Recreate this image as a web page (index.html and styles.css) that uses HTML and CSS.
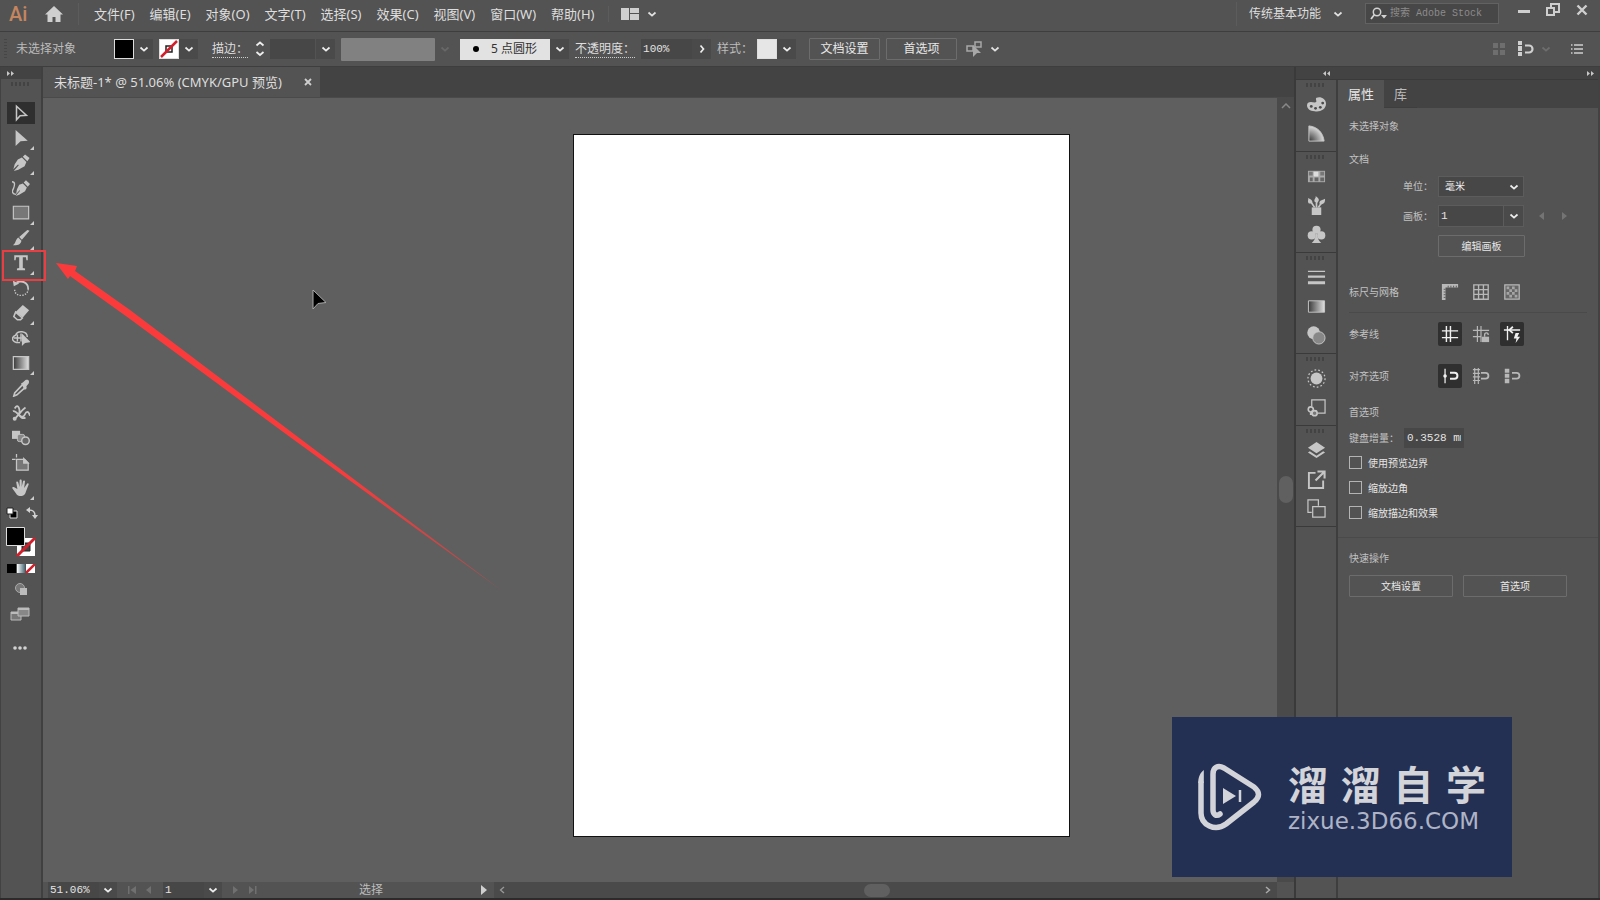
FILE: index.html
```html
<!DOCTYPE html>
<html lang="zh-CN">
<head>
<meta charset="utf-8">
<title>未标题-1</title>
<link rel="stylesheet" href="styles.css">
</head>
<body>
<svg class="defs" width="0" height="0" aria-hidden="true">
  <defs>
    <linearGradient id="fade"><stop offset="0" stop-color="#3a3a3a"/><stop offset="1" stop-color="#e0e0e0"/></linearGradient>
    <linearGradient id="fade2"><stop offset="0" stop-color="#fff"/><stop offset="1" stop-color="#4a6a78"/></linearGradient>
    <radialGradient id="quarter" cx="0" cy="1" r="1"><stop offset="0" stop-color="#333"/><stop offset="1" stop-color="#ddd"/></radialGradient>
    <linearGradient id="tail" gradientUnits="userSpaceOnUse" x1="340" y1="470" x2="500" y2="590"><stop offset="0" stop-color="#fb3b3b"/><stop offset="1" stop-color="#fb3b3b" stop-opacity=".5"/></linearGradient>
    <symbol id="down" viewBox="0 0 10 10"><path d="M1.500 3.500 5 6.700 8.500 3.500" fill="none" stroke="currentColor" stroke-width="1.700"/></symbol>
    <symbol id="magnet" viewBox="0 0 18 18"><path d="M8 5.500h4a3.500 3.500 0 0 1 0 7H8" fill="none" stroke="currentColor" stroke-width="2.200"/></symbol>
  </defs>
</svg>

<header class="menubar">
  <span class="brand">Ai</span>
  <button class="icon-btn home" aria-label="主页"><svg width="18" height="16" viewBox="0 0 18 16"><path d="M9 0 0 8.500h2.500V16h5v-5h3v5h5V8.500H18Z"/></svg></button>
  <nav class="menus">
    <button>文件(F)</button><button>编辑(E)</button><button>对象(O)</button><button>文字(T)</button><button>选择(S)</button><button>效果(C)</button><button>视图(V)</button><button>窗口(W)</button><button>帮助(H)</button>
  </nav>
  <button class="icon-btn arrange" aria-label="排列文档"><svg width="18" height="12" viewBox="0 0 18 12"><path d="M0 0h8v12H0zM9 0h9v5H9zM9 6h9v6H9z"/></svg><svg class="chev" width="10" height="10"><use href="#down"/></svg></button>
  <button class="icon-btn workspace-switch">传统基本功能<svg class="chev" width="10" height="10"><use href="#down"/></svg></button>
  <label class="search"><svg width="18" height="14" viewBox="0 0 18 14"><circle cx="7" cy="5" r="3.700" fill="none" stroke="currentColor" stroke-width="1.500"/><path d="M4.500 7.500 1 12" stroke="currentColor" stroke-width="1.800"/><path d="M11 8h6l-3 3.500z"/></svg><input type="text" placeholder="搜索 Adobe Stock" aria-label="搜索 Adobe Stock"></label>
  <div class="window-buttons">
    <button class="icon-btn" aria-label="最小化"><svg width="16" height="16" viewBox="0 0 16 16"><path d="M2 8h12v3H2z"/></svg></button>
    <button class="icon-btn" aria-label="还原"><svg width="16" height="16" viewBox="0 0 16 16"><path d="M6 7V2h8v8H9M2 6h7v7H2z" fill="none" stroke="currentColor" stroke-width="2"/></svg></button>
    <button class="icon-btn" aria-label="关闭"><svg width="16" height="16" viewBox="0 0 16 16"><path d="m3.500 3.500 9 9m0-9-9 9" stroke="currentColor" stroke-width="2.400"/></svg></button>
  </div>
</header>

<section class="controlbar">
  <span class="side-grip"></span>
  <span class="status-label">未选择对象</span>
  <div class="combo"><button class="swatch swatch-black" aria-label="填色"></button><button class="drop" aria-label="填色选项"><svg width="10" height="10"><use href="#down"/></svg></button></div>
  <div class="combo"><button class="swatch" aria-label="描边颜色"><svg width="20" height="20" viewBox="0 0 20 20"><path d="M0 0h20v20H0z" fill="#fff"/><path d="M6 6h6v6H6z" fill="none" stroke="#222" stroke-width="1.500"/><path d="M1 17 17 1" stroke="#d0202c" stroke-width="2.500"/></svg></button><button class="drop" aria-label="描边选项"><svg width="10" height="10"><use href="#down"/></svg></button></div>
  <label class="dotted stroke-label" for="stroke-w">描边：</label>
  <button class="icon-btn spin" aria-label="调整描边"><svg width="10" height="18" viewBox="0 0 10 18"><path d="M1.500 5.500 5 2.500l3.500 3M1.500 12 5 15l3.500-3" fill="none" stroke="currentColor" stroke-width="1.800"/></svg></button>
  <div class="combo"><input id="stroke-w" class="field stroke-field" type="text"><button class="drop" aria-label="描边粗细"><svg width="10" height="10"><use href="#down"/></svg></button></div>
  <div class="combo"><span class="profile"></span><button class="drop drop-off" aria-label="宽度配置" disabled><svg width="10" height="10"><use href="#down"/></svg></button></div>
  <div class="combo"><button class="brush"><i class="dot"></i>5 点圆形</button><button class="drop" aria-label="画笔"><svg width="10" height="10"><use href="#down"/></svg></button></div>
  <label class="dotted opacity-label" for="opacity">不透明度：</label>
  <div class="combo"><input id="opacity" class="field opacity-field" type="text" value="100%"><button class="drop" aria-label="不透明度"><svg width="8" height="12" viewBox="0 0 8 12"><path d="m2.500 2.500 3 3.500-3 3.500" fill="none" stroke="currentColor" stroke-width="1.700"/></svg></button></div>
  <span class="style-label">样式：</span>
  <div class="combo"><button class="swatch swatch-light" aria-label="图形样式"></button><button class="drop" aria-label="样式选项"><svg width="10" height="10"><use href="#down"/></svg></button></div>
  <div class="bar-buttons"><button class="outline-btn">文档设置</button><button class="outline-btn">首选项</button></div>
  <button class="icon-btn select-like" aria-label="选择类似对象"><svg width="18" height="18" viewBox="0 0 18 18"><path d="M1 6h6v5H1zM9 2h6v5H9z" fill="none" stroke="currentColor" stroke-width="1.500"/><path d="m7 5 8 8h-4l-4 4z"/></svg><svg class="chev" width="10" height="10"><use href="#down"/></svg></button>
  <div class="bar-right">
    <svg class="faint" width="12" height="12" viewBox="0 0 12 12"><path d="M0 0h5v5H0zM7 0h5v5H7zM0 7h5v5H0zM7 7h5v5H7z"/></svg>
    <button class="icon-btn" aria-label="对齐像素"><svg width="18" height="18" viewBox="0 0 18 18"><path d="M1 1h4v4H1zM1 6h4v5H1zM1 12h4v4H1z"/><use href="#magnet" width="18" height="18"/></svg></button>
    <svg class="faint" width="10" height="10"><use href="#down"/></svg>
    <button class="icon-btn list-btn" aria-label="菜单"><svg width="12" height="10" viewBox="0 0 12 10"><path d="M0 1h1.500M3 1h9M0 5h1.500M3 5h9M0 9h1.500M3 9h9" stroke="currentColor" stroke-width="1.500"/></svg></button>
  </div>
</section>

<main class="app">
  <aside class="toolbar">
    <div class="strip"><svg width="7" height="5" viewBox="0 0 7 5"><path d="M0 0l3 2.500L0 5zM4 0l3 2.500L4 5z"/></svg></div>
    <span class="grip"></span>
    <div class="tools">
      <button class="tool active" aria-label="选择"><svg viewBox="0 0 20 20"><path d="M5 2.500v15l4-4.500 7-.5z" fill="none" stroke="currentColor" stroke-width="1.700"/></svg></button>
      <button class="tool more" aria-label="直接选择"><svg viewBox="0 0 20 20"><path d="M4 1v18l5.500-5.500 8-.5z"/></svg></button>
      <button class="tool more" aria-label="钢笔"><svg viewBox="0 0 20 20"><path fill-rule="evenodd" d="m11 4 5 5-2 4.500-7 4-5 1.500 5.500-6.500-.8-.8L1.500 17 3 11.500 6.500 6zM12 3l2.500-2.500 5 4L17 8z"/></svg></button>
      <button class="tool" aria-label="曲率"><svg viewBox="0 0 20 20"><path d="m12 5 4.500 4.500-2 4-6.500 4-4 1.500 5-6-.6-.6L4.500 17l1-5.500L8 6.500zM13 4l2.500-2.500L20 5.500l-2.500 3z"/><path d="M0 3c4 0 3 4 1.500 8-2 3-1 6 3 6" fill="none" stroke="currentColor" stroke-width="1.500"/></svg></button>
      <button class="tool more" aria-label="矩形"><svg viewBox="0 0 20 20"><path d="M1.500 2.500h17v14h-17z" fill="#777" stroke="currentColor" stroke-width="1.300"/></svg></button>
      <button class="tool more" aria-label="画笔"><svg viewBox="0 0 20 20"><path d="M19.500 2 17 1 8 9l3 3zM7 9.500l3.500 3.500c-1 5-5 5-9.500 5 3-1 3-7 6-8.500z"/></svg></button>
      <button class="tool more" aria-label="文字"><svg viewBox="0 0 20 20"><path d="M2.500 1.500h15V7H16l-.5-3.500H12V15.500l2.500.5V18h-9v-2l2.500-.5V3.500H4.500L4 7H2.500z"/></svg></button>
      <button class="tool more" aria-label="旋转"><svg viewBox="0 0 20 20"><path d="M5 4c6-3 13 0 13 7" fill="none" stroke="currentColor" stroke-width="2"/><path d="m1 2 1 6 6-3z"/><path d="M18 11c0 9-15 10-15 1" fill="none" stroke="currentColor" stroke-width="1.500" stroke-dasharray="1.500 1.500"/></svg></button>
      <button class="tool more" aria-label="橡皮擦"><svg viewBox="0 0 20 20"><path d="m12 1 7 6-7 8-8-6z"/><path d="m4 9 7.500 6.500-2 2H6l-4-3.500z" fill="none" stroke="currentColor" stroke-width="1.700"/></svg></button>
      <button class="tool" aria-label="形状生成器"><svg viewBox="0 0 20 20"><path d="M9 15c-9 1-11-6-5-8 2-6 13-5 13 2M2 10h9M6 6v8M10 5v9" fill="none" stroke="currentColor" stroke-width="1.600"/><path d="M11 5v14l3.500-3.500 6-1z"/></svg></button>
      <button class="tool more" aria-label="渐变"><svg viewBox="0 0 20 20"><path d="M1.500 3h17v14h-17z" fill="url(#fade)" stroke="currentColor" stroke-width="1.400"/></svg></button>
      <button class="tool" aria-label="吸管"><svg viewBox="0 0 20 20"><path d="m12 6-9 9.500L2 19l3.500-1.500L15 9z" fill="none" stroke="currentColor" stroke-width="1.800"/><path d="m10 5 2-1 3-3c4-1 4.500 2 3.500 4l-2.500 3v3l-2 1z"/></svg></button>
      <button class="tool" aria-label="宽度"><svg viewBox="0 0 20 20"><path d="M2 17C7 14 9 8 15 4M3 5c4-7 6 2 5 5s4 6 6 2 4-5 6 1M1 8c5-2 8 11 14 7" fill="none" stroke="currentColor" stroke-width="2"/><circle cx="3" cy="16.500" r="2.200"/></svg></button>
      <button class="tool" aria-label="混合"><svg viewBox="0 0 20 20"><path d="M0 2h9v9H0z"/><rect x="6" y="6" width="8" height="8" rx="2" fill="#888" stroke="currentColor"/><circle cx="15" cy="13" r="4.200" fill="#666" stroke="currentColor" stroke-width="1.600"/></svg></button>
      <button class="tool" aria-label="画板"><svg viewBox="0 0 20 20"><path d="M5 6h9l4 4v8H5z" fill="#777" stroke="currentColor" stroke-width="1.400"/><path d="M13 5v5h5zM5 0v4M0 6h4" stroke="currentColor" stroke-width="1.400"/></svg></button>
      <button class="tool more" aria-label="抓手"><svg viewBox="0 0 20 20"><path d="m6 11-1.300-7c0-1.700 1.900-1.700 2.300 0L8.400 9V2c0-2 2.400-2 2.400 0v7l1.400-6.500c.4-1.500 2.600-1 2.200.5L13.500 10l3-4.500c.8-1.300 2.500-.5 1.900 1L15.500 14c-1 4-3 5-5.500 5s-4.500-1-5.500-3L.5 10.500c-.8-1.300 1-2.300 2-1.200z"/></svg></button>
    </div>
    <div class="swap"><svg width="12" height="12" viewBox="0 0 12 12"><path d="M4 4h7v7H4z" fill="#000" stroke="#ddd"/><path d="M1 1h6v6H1z" fill="#fff" stroke="#222"/></svg><svg width="12" height="12" viewBox="0 0 12 12"><path d="M3 3c4 0 6 1 6 6" fill="none" stroke="currentColor" stroke-width="1.600"/><path d="M0 3 4 0v6zM6 8h6l-3 4z"/></svg></div>
    <svg class="fillstroke" width="30" height="30" viewBox="0 0 30 30"><path d="M11 11h18v18H11z" fill="#fff"/><path d="M16 16h8v8h-8z" fill="#444" stroke="#222"/><path d="M11 29 29 11" stroke="#d0202c" stroke-width="3"/><path d="M.5.500h18v18H.5z" fill="#000" stroke="#ddd"/></svg>
    <svg class="modes" width="28" height="9" viewBox="0 0 28 9"><path d="M0 0h9v9H0z" fill="#000"/><path d="M10 0h8v9h-8z" fill="url(#fade2)"/><path d="M19 0h9v9h-9z" fill="#fff"/><path d="m19 9 9-9" stroke="#d0202c" stroke-width="2.500"/></svg>
    <svg class="drawmode" width="14" height="14" viewBox="0 0 14 14"><circle cx="6" cy="6" r="4.500" fill="#777" stroke="#aaa"/><path d="M6 6h7v7H6z" fill="#bbb"/></svg>
    <svg class="screenmode" width="20" height="14" viewBox="0 0 20 14"><path d="M1 5h10v8H1z" fill="#777" stroke="#bbb"/><path d="M8 1h11v8H8z" fill="#888" stroke="#bbb"/><path d="M8 1h11v2H8zM1 5h7v2H1z" fill="#bbb"/></svg>
    <svg class="dots" width="14" height="4" viewBox="0 0 14 4"><circle cx="2" cy="2" r="1.800"/><circle cx="7" cy="2" r="1.800"/><circle cx="12" cy="2" r="1.800"/></svg>
    <span class="type-highlight"></span>
  </aside>

  <section class="document">
    <div class="doc-tabs"><div class="doc-tab"><span>未标题-1* @ 51.06% (CMYK/GPU 预览)</span><button class="icon-btn" aria-label="关闭文档"><svg width="8" height="8" viewBox="0 0 8 8"><path d="m1 1 6 6m0-6L1 7" stroke="currentColor" stroke-width="1.800"/></svg></button></div></div>
    <div class="canvas-row">
      <div class="canvas"><div class="artboard"></div></div>
      <div class="vscroll"><svg class="up" width="10" height="6" viewBox="0 0 10 6"><path d="m1 5 4-4 4 4" fill="none" stroke="#888" stroke-width="1.500"/></svg><i class="vthumb"></i></div>
    </div>
    <footer class="statusbar">
      <input class="field zoom" type="text" value="51.06%" aria-label="缩放"><button class="icon-btn sdrop" aria-label="缩放选项"><svg width="10" height="10"><use href="#down"/></svg></button>
      <svg class="nav" width="26" height="10" viewBox="0 0 26 10"><path d="M1 1h1.500v8H1zM9 1v8L3.500 5zM24 1v8l-5-4z"/></svg>
      <input class="field page" type="text" value="1" aria-label="画板导航"><button class="icon-btn sdrop" aria-label="画板选项"><svg width="10" height="10"><use href="#down"/></svg></button>
      <svg class="nav" width="26" height="10" viewBox="0 0 26 10"><path d="m1 1 5 4-5 4zM17 1l5 4-5 4zM23 1h1.500v8H23z"/></svg>
      <span class="mode">选择</span>
      <button class="icon-btn play" aria-label="状态选项"><svg width="6" height="10" viewBox="0 0 6 10"><path d="m0 0 6 5-6 5z"/></svg></button>
      <div class="hscroll"><svg width="6" height="8" viewBox="0 0 6 8"><path d="M5 1 1.500 4 5 7" fill="none" stroke="#999" stroke-width="1.300"/></svg><i class="hthumb"></i><svg width="6" height="8" viewBox="0 0 6 8"><path d="m1 1 3.500 3L1 7" fill="none" stroke="#aaa" stroke-width="1.500"/></svg></div>
    </footer>
  </section>

  <section class="side">
    <div class="strip side-strip"><svg width="7" height="5" viewBox="0 0 7 5"><path d="M3 0v5L0 2.500zM7 0v5L4 2.500z"/></svg><svg width="7" height="5" viewBox="0 0 7 5"><path d="M0 0l3 2.500L0 5zM4 0l3 2.500L4 5z"/></svg></div>
    <div class="side-body">
      <div class="dock">
        <div class="group"><span class="grip"></span>
          <button aria-label="颜色"><svg viewBox="0 0 20 20"><path d="M10 3c4-2 10 1 10 6 0 7-7 9-12 8-5 0-8-3-8-6 0-4 4-4 8-3 4 0 0-4 2-5z"/><g fill="#4a4a4a"><circle cx="4.500" cy="12" r="1.500"/><circle cx="9" cy="14" r="1.500"/><circle cx="14" cy="13" r="1.500"/><circle cx="16.500" cy="8.500" r="1.500"/></g></svg></button>
          <button aria-label="颜色参考"><svg viewBox="0 0 20 20"><path d="M2 2c10 1 15 8 16 16H2z" fill="url(#quarter)" stroke="currentColor"/></svg></button></div>
        <div class="group"><span class="grip"></span>
          <button aria-label="色板"><svg viewBox="0 0 20 20"><path d="M1 4h18v12H1z" fill="#aaa"/><path d="M2 5h4v4H2zM14 5h4v4h-4z" fill="#777"/><path d="M7 5h5v5H7z" fill="#ddd"/><path d="M3 11h3v4H3zM8 11h4v4H8zM14 11h4v4h-4z" fill="#666"/></svg></button>
          <button aria-label="画笔"><svg viewBox="0 0 20 20"><path d="M5 12h10v8H5z"/><path d="M8 12 4 6M10 12V5m2 7 4-6" stroke="currentColor" stroke-width="1.800"/><path d="M8 6c-1-3 2-4 1-6 3 2 5 4 2 7zM2 8C0 5 2 4 1 2c3 1 6 3 4 6zM13 8c0-4 3-3 6-5 0 3 0 5-4 6z"/></svg></button>
          <button aria-label="符号"><svg viewBox="0 0 20 20"><circle cx="10" cy="5" r="4.300"/><circle cx="5" cy="11" r="4.300"/><circle cx="15" cy="11" r="4.300"/><path d="M9 9h2c0 5 1 7 4 10H5c3-3 4-5 4-10z"/></svg></button></div>
        <div class="group"><span class="grip"></span>
          <button aria-label="描边"><svg viewBox="0 0 20 20"><path d="M1 3h18v1.300H1zM1 8h18v2.200H1zM1 14h18v3H1z"/></svg></button>
          <button aria-label="渐变"><svg viewBox="0 0 20 20"><path d="M1.500 4h17v12h-17z" fill="url(#fade)" stroke="currentColor"/></svg></button>
          <button aria-label="透明度"><svg viewBox="0 0 20 20"><circle cx="7" cy="7" r="6.700"/><circle cx="12.500" cy="12.500" r="6.500" fill="#888" stroke="currentColor"/></svg></button></div>
        <div class="group"><span class="grip"></span>
          <button aria-label="外观"><svg viewBox="0 0 20 20"><circle cx="10" cy="10" r="6.200"/><circle cx="10" cy="10" r="9" fill="none" stroke="currentColor" stroke-width="1.300" stroke-dasharray="1.800 2.200"/></svg></button>
          <button aria-label="图形样式"><svg viewBox="0 0 20 20"><path d="M5 9V2h14v14h-8" fill="none" stroke="currentColor" stroke-width="1.300"/><circle cx="4" cy="12" r="2.700" fill="none" stroke="currentColor" stroke-width="1.700"/><path d="M5 13h5v2H6v3H3v-2z"/><circle cx="8" cy="16" r="2.700" fill="#777" stroke="currentColor" stroke-width="1.700"/></svg></button></div>
        <div class="group"><span class="grip"></span>
          <button aria-label="图层"><svg viewBox="0 0 20 20"><path d="m10 1 9 6-9 6-9-6zM1 12l2-1.300 7 4.700 7-4.700 2 1.300-9 6z"/></svg></button>
          <button aria-label="资源导出"><svg viewBox="0 0 20 20"><path d="M9 3H2v16h15v-8" fill="none" stroke="currentColor" stroke-width="2"/><path d="m9 11 9-9M11 1.500h7.500V9" fill="none" stroke="currentColor" stroke-width="2.200"/></svg></button>
          <button aria-label="画板"><svg viewBox="0 0 20 20"><path d="M5 14H1V1h11v6M6 8h13v11H6z" fill="none" stroke="currentColor" stroke-width="1.300"/></svg></button></div>
      </div>

      <aside class="panel">
        <div class="panel-tabs"><button class="ptab current">属性</button><button class="ptab">库</button></div>
        <div class="panel-body">
          <p class="selection">未选择对象</p>
          <h2 class="doc-title">文档</h2>
          <div class="row form"><label for="unit">单位：</label><span class="select"><select id="unit"><option>毫米</option></select><svg width="10" height="10"><use href="#down"/></svg></span></div>
          <div class="row form"><label for="board">画板：</label><span class="combo board"><input id="board" class="field" type="text" value="1"><button class="drop" aria-label="选择画板"><svg width="10" height="10"><use href="#down"/></svg></button></span><svg class="pager" width="30" height="8" viewBox="0 0 30 8"><path d="M6 0v8L1 4zM24 0v8l5-4z"/></svg></div>
          <div class="row form"><span></span><button class="outline-btn wide">编辑画板</button></div>
          <div class="row icons rulers"><span>标尺与网格</span>
            <button aria-label="标尺"><svg viewBox="0 0 20 20"><path d="M1 1h18v4H5v14H1z"/><path d="M3 7h2M3 10h2M3 13h2M3 16h2M8 3v2M11 3v2M14 3v2M17 3v2" stroke="#535353"/></svg></button>
            <button aria-label="网格"><svg viewBox="0 0 20 20"><path d="M2 2h16v16H2zM2 7.300h16M2 12.700h16M7.300 2v16M12.700 2v16" fill="none" stroke="currentColor" stroke-width="1.500"/></svg></button>
            <button aria-label="透明度网格"><svg viewBox="0 0 20 20"><path d="M2 2h16v16H2z" fill="#666" stroke="currentColor" stroke-width="1.400"/><path d="M4 4h3v3H4zM10 4h3v3h-3zM7 7h3v3H7zM13 7h3v3h-3zM4 10h3v3H4zM10 10h3v3h-3zM7 13h3v3H7zM13 13h3v3h-3z" fill="#a5a5a5"/></svg></button></div>
          <div class="row icons"><span>参考线</span>
            <button class="on" aria-label="显示参考线"><svg viewBox="0 0 20 20"><path d="M6 1v18M10.500 1v18M1 6.500h18M1 14h18" stroke="currentColor" stroke-width="1.600"/></svg></button>
            <button aria-label="锁定参考线"><svg viewBox="0 0 20 20"><path d="M6 1v18M10 1v18M1 6h18M1 13h9" stroke="currentColor" stroke-width="1.300"/><path d="M11 13h8v6h-8z"/><path d="M14 13v-2c0-3 4-3 4 0" fill="none" stroke="currentColor" stroke-width="1.500"/></svg></button>
            <button class="on" aria-label="智能参考线"><svg viewBox="0 0 20 20"><path d="M5 1v16M1 5.500h18" stroke="currentColor" stroke-width="1.500"/><path d="m11 2-4 3.500L11 9" fill="none" stroke="currentColor" stroke-width="2"/><path d="m14 9-2 6h3l-1 5 5-7h-3l2-4z"/></svg></button></div>
          <div class="row icons"><span>对齐选项</span>
            <button class="on" aria-label="对齐点"><svg viewBox="0 0 20 20"><path d="M4.500 2v16" stroke="currentColor" stroke-width="1.400"/><circle cx="4.500" cy="10" r="2"/><path d="M10 6.500h5a3 3 0 0 1 0 6.500h-5" fill="none" stroke="currentColor" stroke-width="2.200"/></svg></button>
            <button aria-label="对齐网格"><svg viewBox="0 0 20 20"><path d="M3 1v18M7 1v18M1 3h8M1 7h8M1 11h8M1 15h8" stroke="currentColor" stroke-width="1.300"/><path d="M10 6.500h5a3 3 0 0 1 0 6.500h-5" fill="none" stroke="currentColor" stroke-width="2"/></svg></button>
            <button aria-label="对齐像素"><svg viewBox="0 0 20 20"><path d="M2 2h5v4.500H2zM2 7.500h5V12H2zM2 13h5v5H2z"/><path d="M10 6.500h5a3 3 0 0 1 0 6.500h-5" fill="none" stroke="currentColor" stroke-width="2"/></svg></button></div>
          <h2 class="pref-title">首选项</h2>
          <div class="row increment"><label for="inc">键盘增量：</label><input id="inc" class="field" type="text" value="0.3528 mm"></div>
          <label class="check"><input type="checkbox">使用预览边界</label>
          <label class="check"><input type="checkbox">缩放边角</label>
          <label class="check"><input type="checkbox">缩放描边和效果</label>
          <h2 class="quick-title">快速操作</h2>
          <div class="quick"><button class="outline-btn">文档设置</button><button class="outline-btn">首选项</button></div>
        </div>
      </aside>
    </div>
  </section>
</main>

<svg class="pointer-arrow" width="510" height="600" viewBox="0 0 510 600" aria-hidden="true"><path d="M56 263 77 266 75 271 130 310 290 431 400 514 501 590 400 517 290 437 130 319 70 276 68 279Z" fill="url(#tail)"/></svg>
<svg class="cursor" width="16" height="22" viewBox="0 0 16 22" aria-hidden="true"><path d="M1 1v19l5-5.500 8-1z" fill="#000" stroke="#aaa"/></svg>

<div class="watermark">
  <svg width="66" height="68" viewBox="0 0 66 68" aria-hidden="true"><g fill="none" stroke="#d3d4d9" stroke-width="5.500" stroke-linecap="round" stroke-linejoin="round"><path d="M22 51c-4 3-7 0-7-4V11c0-7 5-9 11-6l30 19c6 5 6 10 0 15L28 61C17 69 3 62 3 50V20"/></g><path d="M.2 20C.2 14 2 10 5.800 7v13z" fill="#d3d4d9"/><path d="m25 25 13 8-13 8z" fill="#d3d4d9"/><path d="M42 27v12" stroke="#d3d4d9" stroke-width="2.500"/></svg>
  <div class="wm-text"><div class="wm-name"><span>溜</span><span>溜</span><span>自</span><span>学</span></div><div class="wm-url">zixue.3D66.COM</div></div>
</div>
</body>
</html>
```
FILE: styles.css
```css
* { box-sizing: border-box; }
body {
  margin: 0;
  height: 100vh;
  display: flex;
  flex-direction: column;
  overflow: hidden;
  position: relative;
  background: #535353;
  border-bottom: 2px solid #2b2b2b;
  color: #d2d2d2;
  font: 12px/16px "Noto Sans", "Noto Sans CJK SC", sans-serif;
}
button, input, select {
  font: inherit;
  color: inherit;
  background: none;
  border: 0;
  padding: 0;
  margin: 0;
  border-radius: 0;
}
svg { fill: currentColor; display: block; flex: none; }
.defs { position: absolute; }
h2, p { margin: 0; font-size: inherit; font-weight: normal; }
.icon-btn { display: flex; align-items: center; color: #cfcfcf; white-space: nowrap; }
.chev { color: #e2e2e2; }

/* Menu bar */
.menubar { flex: none; display: flex; align-items: center; height: 32px; padding: 0 10px 4px 9px; border-bottom: 1px solid #3e3e3e; }
.brand { width: 36px; color: #c5865f; font: 500 20px/24px Roboto, sans-serif; }
.home { height: 22px; padding-right: 15px; border-right: 1px solid #5c5c5c; }
.menus { display: flex; gap: 15px; padding: 0 14px 0 15px; font-size: 13px; border-right: 1px solid #5c5c5c; color: #dedede; }
.menus button { white-space: nowrap; }
.arrange { gap: 8px; padding-left: 12px; }
.workspace-switch { margin-left: auto; gap: 12px; height: 24px; padding: 0 22px 0 12px; border-left: 1px solid #5c5c5c; color: #dedede; }
.search { display: flex; align-items: center; width: 134px; height: 21px; padding: 0 4px; gap: 2px; border: 1px solid #626262; background: #474747; }
.search input { width: 104px; outline: 0; font: 10px/16px "Liberation Mono", "Noto Sans CJK SC", monospace; }
.search input::placeholder { color: #8c8c8c; opacity: 1; }
.window-buttons { display: flex; gap: 13px; padding: 0 0 7px 17px; }

/* Control bar */
.controlbar { flex: none; display: flex; align-items: center; height: 35px; border-bottom: 1px solid #3e3e3e; padding: 0 17px 0 4px; }
.side-grip { width: 3px; height: 20px; margin-right: 9px; background: repeating-linear-gradient(#464646 0 1px, transparent 1px 3px); }
.status-label { width: 98px; color: #bcbcbc; }
.combo { display: flex; flex: none; margin-right: 6px; }
.swatch { width: 20px; height: 20px; border: 1px solid #ddd; overflow: hidden; }
.swatch-black { background: #000; }
.swatch-light { background: #e6e6e6; }
.drop { display: flex; align-items: center; justify-content: center; width: 19px; height: 20px; background: #4a4a4a; color: #eee; }
.drop-off { background: none; color: #686868; }
.dotted { border-bottom: 1px dotted #ccc; line-height: 16px; color: #dedede; white-space: nowrap; }
.stroke-label { margin-left: 8px; }
.spin { margin: 0 5px 0 7px; color: #eee; }
.field { background: #474747; height: 20px; outline: 0; font: 11px/16px "Liberation Mono", "Noto Sans CJK SC", monospace; color: #e4e4e4; padding: 0 2px; }
.stroke-field { width: 45px; margin-right: 1px; }
.profile { width: 94px; height: 23px; background: #818181; border-radius: 1px; align-self: center; }
.controlbar .combo { align-items: center; }
.brush { display: flex; align-items: center; justify-content: center; gap: 12px; width: 90px; height: 21px; background: #e2e2e2; color: #333; }
.brush .dot { width: 6px; height: 6px; border-radius: 50%; background: #000; }
.opacity-label { margin-right: 6px; }
.opacity-field { width: 51px; }
.style-label { color: #bcbcbc; margin-right: 4px; }
.outline-btn { height: 22px; border: 1px solid #6c6c6c; border-radius: 1px; color: #e8e8e8; text-align: center; }
.bar-buttons { display: flex; gap: 6px; margin: 0 9px 0 7px; }
.bar-buttons .outline-btn { width: 71px; }
.select-like { gap: 6px; color: #a8a8a8; }
.bar-right { display: flex; align-items: center; gap: 6px; margin-left: auto; }
.bar-right .faint { color: #6e6e6e; }
.bar-right .icon-btn { margin-left: 6px; }
.bar-right .list-btn { margin-left: 14px; }

/* Toolbar */
.app { flex: 1; display: flex; min-height: 0; }
.toolbar { position: relative; flex: none; width: 43px; display: flex; flex-direction: column; border-right: 2px solid #404040; border-left: 1px solid #424242; }
.strip { display: flex; align-items: center; height: 12px; background: #434343; color: #c8c8c8; padding: 0 6px; flex: none; }
.grip { display: block; width: 20px; height: 4px; margin: 3px auto; background: repeating-linear-gradient(90deg, #434343 0 2px, transparent 2px 4px); }
.tools { display: flex; flex-direction: column; gap: 3px; margin-top: 13px; padding-left: 6px; }
.tool { position: relative; width: 28px; height: 22px; color: #c6c6c6; }
.tool svg { width: 18px; height: 18px; margin: 0 auto; }
.tool.active { background: #2f2f2f; }
.tool.more::after { content: ""; position: absolute; right: 1px; bottom: -1px; border: 2px solid; border-color: transparent #ccc #ccc transparent; }
.swap { display: flex; justify-content: space-between; padding: 0 3px 0 5px; margin-top: 8px; }
.fillstroke { margin: 8px 0 0 5px; }
.modes { margin: 7px 0 0 6px; }
.drawmode { margin: 9px 0 0 13px; }
.screenmode { margin: 11px 0 0 9px; }
.dots { margin: 25px 0 0 12px; }
.type-highlight { position: absolute; left: 1px; top: 183px; width: 44px; height: 31px; border: 2px solid #ea3f42; z-index: 1; }

/* Document */
.document { flex: 1; min-width: 0; display: flex; flex-direction: column; }
.doc-tabs { display: flex; height: 31px; background: #434343; flex: none; border-bottom: 1px solid #4a4a4a; }
.doc-tab { display: flex; align-items: center; gap: 22px; padding: 0 8px 0 11px; background: #535353; font-size: 13px; color: #dedede; white-space: nowrap; }
.canvas-row { flex: 1; display: flex; min-height: 0; }
.canvas { flex: 1; position: relative; background: #5f5f5f; }
.artboard { position: absolute; left: 530px; top: 36px; width: 497px; height: 703px; background: #fff; border: 1px solid #111; }
.vscroll { width: 17px; background: #4a4a4a; padding-top: 5px; }
.up { margin: 0 auto; }
.vthumb { display: block; width: 14px; height: 27px; margin: 367px auto 0; border-radius: 7px; background: #606060; }
.statusbar { flex: none; height: 16px; display: flex; align-items: center; padding-left: 5px; }
.statusbar .field { height: 16px; }
.zoom { width: 51px; }
.sdrop { justify-content: center; width: 18px; height: 16px; background: #4a4a4a; color: #eee; }
.nav { margin: 0 10px; color: #707070; }
.page { width: 41px; }
.mode { flex: none; width: 206px; text-align: center; color: #bcbcbc; }
.play { justify-content: center; width: 20px; }
.hscroll { flex: 1; height: 16px; display: flex; align-items: center; justify-content: space-between; background: #4a4a4a; padding: 0 6px 0 5px; margin-right: 17px; }
.hthumb { width: 26px; height: 13px; margin-right: 16px; border-radius: 7px; background: #606060; }

/* Side docks */
.side { flex: none; width: 306px; display: flex; flex-direction: column; border-left: 2px solid #3a3a3a; border-right: 2px solid #424242; }
.side-strip { justify-content: space-between; padding: 0 4px 0 27px; }
.side-body { flex: 1; display: flex; border-top: 1px solid #3a3a3a; }
.dock { flex: none; width: 42px; border-right: 2px solid #3e3e3e; }
.group { display: flex; flex-direction: column; padding-bottom: 3px; border-bottom: 1px solid #3a3a3a; }
.group button { display: grid; place-items: center; height: 29px; color: #c6c6c6; }
.group svg { width: 19px; height: 19px; }
.panel { flex: 1; min-width: 0; }
.panel-tabs { display: flex; height: 28px; background: #434343; font-size: 13px; }
.ptab { padding: 0 10px; color: #bcbcbc; border-bottom: 1px solid #3e3e3e; }
.ptab.current { width: 46px; padding: 0; background: #535353; border: 0; color: #e6e6e6; }
.panel-body { padding: 0 11px; font-size: 10px; color: #c2c2c2; }
.selection { line-height: 36px; }
.doc-title { padding-top: 4px; line-height: 23px; }
.row { display: flex; align-items: center; }
.form { height: 30px; }
.form > :first-child { width: 89px; padding-left: 54px; flex: none; white-space: nowrap; }
.select { position: relative; width: 86px; height: 21px; border: 1px solid #5c5c5c; background: #474747; }
.select select { width: 100%; height: 100%; appearance: none; padding-left: 6px; color: #eee; outline: 0; }
.select svg { position: absolute; right: 4px; top: 5px; color: #eee; pointer-events: none; }
.board { width: 86px; margin: 0; border: 1px solid #5c5c5c; }
.board .field { width: 65px; border-right: 1px solid #5c5c5c; }
.pager { margin-left: 14px; color: #747474; }
.wide { width: 87px; }
.icons { height: 42px; gap: 7px; }
.icons span { width: 82px; }
.icons button { display: grid; place-items: center; width: 24px; height: 24px; color: #b8b8b8; border-radius: 2px; }
.icons svg { width: 18px; height: 18px; }
.icons button.on { background: #2f2f2f; color: #f0f0f0; }
.rulers { margin-top: 10px; border-bottom: 1px solid #4a4a4a; }
.pref-title { line-height: 31px; }
.increment { height: 22px; padding-bottom: 2px; }
.increment label { width: 55px; white-space: nowrap; }
.increment .field { width: 60px; padding: 0 3px; font-size: 11px; }
.check { display: flex; align-items: center; gap: 6px; height: 25px; color: #e6e6e6; }
.check input { appearance: none; width: 13px; height: 13px; border: 1px solid #b4b4b4; }
.quick-title { margin: 12px -11px 0; padding: 3px 11px 0; border-top: 1px solid #4a4a4a; line-height: 34px; }
.quick { display: flex; gap: 10px; padding-right: 20px; }
.quick .outline-btn { flex: 1; }

/* Overlays */
.pointer-arrow { position: absolute; left: 0; top: 0; pointer-events: none; }
.cursor { position: absolute; left: 312px; top: 289px; }
.watermark { position: absolute; right: 88px; bottom: 21px; width: 340px; height: 160px; display: flex; align-items: center; gap: 24px; padding: 0 26px; background: #233054; color: #d3d4d9; }
.wm-text { flex: 1; }
.wm-name { display: flex; justify-content: space-between; font: 700 40px/48px "Noto Sans CJK SC", sans-serif; }
.wm-url { font: 23px/28px "DejaVu Sans", sans-serif; color: #aeb4c6; }
```
